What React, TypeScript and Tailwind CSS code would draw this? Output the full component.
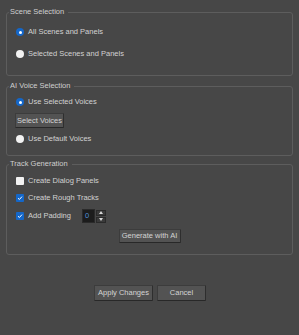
import React, { useState } from 'react';

const font = { fontFamily: '"Liberation Sans", Arial, sans-serif' };

function Group({
  title,
  className = '',
  children,
}: {
  title: string;
  className?: string;
  children: React.ReactNode;
}) {
  return (
    <fieldset
      className={`border border-[#5d5d5d] rounded-[3px] px-[9px] ${className}`}
    >
      <legend className="ml-[-7px] pr-[4px] pl-[1px] h-[10px] leading-[10px] text-[#cfcfcf]">
        {title}
      </legend>
      {children}
    </fieldset>
  );
}

function Radio({
  checked,
  label,
  onClick,
}: {
  checked: boolean;
  label: string;
  onClick: () => void;
}) {
  return (
    <div
      className="flex items-center h-[14px] gap-[4px] cursor-default"
      onClick={onClick}
    >
      {checked ? (
        <span className="w-[8px] h-[8px] rounded-full bg-[#1467c9] flex items-center justify-center">
          <span className="w-[3px] h-[3px] rounded-full bg-white" />
        </span>
      ) : (
        <span className="w-[8px] h-[8px] rounded-full bg-[#f2f2f2]" />
      )}
      <span className="text-[#d2d2d2]">{label}</span>
    </div>
  );
}

function Check({
  checked,
  label,
  onClick,
}: {
  checked: boolean;
  label: string;
  onClick: () => void;
}) {
  return (
    <div className="flex items-center gap-[4px] cursor-default" onClick={onClick}>
      {checked ? (
        <span className="w-[8px] h-[8px] rounded-[1px] bg-[#1467c9] flex items-center justify-center">
          <svg width="6" height="6" viewBox="0 0 6 6">
            <path d="M1 3.2 L2.4 4.5 L5 1.6" stroke="white" strokeWidth="1" fill="none" />
          </svg>
        </span>
      ) : (
        <span className="w-[8px] h-[8px] rounded-[1px] bg-[#f2f2f2]" />
      )}
      <span className="text-[#d2d2d2]">{label}</span>
    </div>
  );
}

function Button({ children, className = '' }: { children: React.ReactNode; className?: string }) {
  return (
    <button
      className={`flex items-center justify-center bg-[#535353] text-[#d4d4d4] border border-[#3c3c3c] border-b-[#282828] border-r-[#2e2e2e] rounded-[1px] ${className}`}
    >
      {children}
    </button>
  );
}

export default function App() {
  const [scene, setScene] = useState<'all' | 'selected'>('all');
  const [voice, setVoice] = useState<'selected' | 'default'>('selected');
  const [dialog, setDialog] = useState(false);
  const [rough, setRough] = useState(true);
  const [padding, setPadding] = useState(true);
  const [pad, setPad] = useState(0);

  return (
    <div
      className="w-[299px] h-[335px] bg-[#474747] text-[7.5px] leading-[10px] pt-[7px] px-[6px] flex flex-col"
      style={font}
    >
      <Group title="Scene Selection" className="pt-[8px] pb-[14px]">
        <div className="flex flex-col gap-[8px]">
          <Radio checked={scene === 'all'} label="All Scenes and Panels" onClick={() => setScene('all')} />
          <Radio
            checked={scene === 'selected'}
            label="Selected Scenes and Panels"
            onClick={() => setScene('selected')}
          />
        </div>
      </Group>

      <Group title="AI Voice Selection" className="mt-[5px] pt-[4px] pb-[9px]">
        <div className="flex flex-col gap-[4px]">
          <Radio
            checked={voice === 'selected'}
            label="Use Selected Voices"
            onClick={() => setVoice('selected')}
          />
          <Button className="w-[49px] h-[15px] ml-[-1px]">Select Voices</Button>
          <Radio
            checked={voice === 'default'}
            label="Use Default Voices"
            onClick={() => setVoice('default')}
          />
        </div>
      </Group>

      <Group title="Track Generation" className="mt-[3px] pt-[5px] pb-[11px]">
        <div className="flex flex-col">
          <div className="h-[14px] flex items-center">
            <Check checked={dialog} label="Create Dialog Panels" onClick={() => setDialog(!dialog)} />
          </div>
          <div className="h-[14px] mt-[3px] flex items-center">
            <Check checked={rough} label="Create Rough Tracks" onClick={() => setRough(!rough)} />
          </div>
          <div className="h-[14px] mt-[4px] flex items-center">
            <div className="w-[66px]">
              <Check checked={padding} label="Add Padding" onClick={() => setPadding(!padding)} />
            </div>
            <div className="flex items-center h-[14px]">
              <div className="w-[13px] h-[14px] bg-[#1c1c1c] border border-[#2a2a2a] text-[#4f8fd6] pl-[2px] flex items-center">
                {pad}
              </div>
              <div className="flex flex-col gap-[1px] ml-[1px]">
                <div
                  className="w-[10px] h-[6px] bg-[#3a3a3a] border border-[#2a2a2a] flex items-center justify-center"
                  onClick={() => setPad(pad + 1)}
                >
                  <span className="w-0 h-0 border-l-[2.5px] border-r-[2.5px] border-b-[3px] border-l-transparent border-r-transparent border-b-[#d8d8d8]" />
                </div>
                <div
                  className="w-[10px] h-[6px] bg-[#3a3a3a] border border-[#2a2a2a] flex items-center justify-center"
                  onClick={() => setPad(Math.max(0, pad - 1))}
                >
                  <span className="w-0 h-0 border-l-[2.5px] border-r-[2.5px] border-t-[3px] border-l-transparent border-r-transparent border-t-[#d8d8d8]" />
                </div>
              </div>
            </div>
          </div>
          <div className="flex justify-center mt-[6px]">
            <Button className="w-[62px] h-[14px]">Generate with AI</Button>
          </div>
        </div>
      </Group>

      <div className="flex justify-center gap-[4px] mt-[30px] pl-[1px]">
        <Button className="w-[59px] h-[16px]">Apply Changes</Button>
        <Button className="w-[49px] h-[16px]">Cancel</Button>
      </div>
    </div>
  );
}
